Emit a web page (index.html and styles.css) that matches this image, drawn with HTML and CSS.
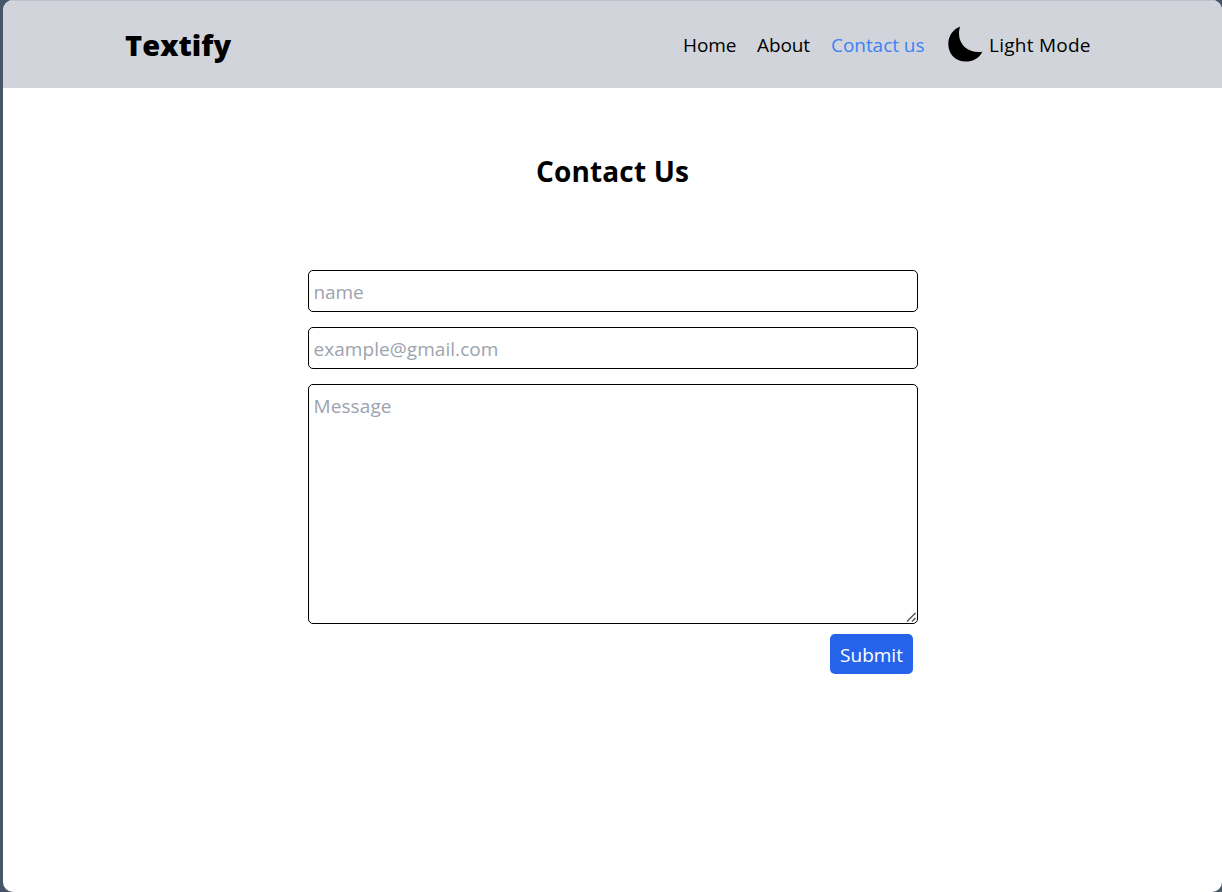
FILE: index.html
```html
<!DOCTYPE html>
<html lang="en">
<head>
<meta charset="utf-8">
<title>Textify</title>
<link rel="stylesheet" href="styles.css">
</head>
<body>
<div class="window">
  <header class="navbar">
    <span class="brand">Textify</span>
    <nav class="links">
      <a class="home">Home</a>
      <a class="about">About</a>
      <a class="contact">Contact us</a>
    </nav>
    <div class="mode">
      <svg class="moon" viewBox="0 0 36 37" width="36" height="37"><path d="M13.3 .6C5.8 3.5 1.3 10 1.3 18C1.3 28.4 9 35.6 18.5 35.6C26.2 35.6 32.2 32 35.4 25.7C23.5 27.6 12 20.6 12 7.5C12 5 12.4 2.7 13.3 .6Z"/></svg>
      <span class="mode-label">Light Mode</span>
    </div>
  </header>
  <main class="content">
    <h1 class="title">Contact Us</h1>
    <form class="form">
      <input class="field name" type="text" placeholder="name">
      <input class="field email" type="email" placeholder="example@gmail.com">
      <div class="message-box">
        <textarea class="field message" placeholder="Message"></textarea>
        <svg class="grip" viewBox="0 0 12 12" width="12" height="12"><path d="M2 10.5L10.5 2M7 10.5L10.5 7"/></svg>
      </div>
      <button class="submit" type="button"><span>Submit</span></button>
    </form>
  </main>
</div>
</body>
</html>
```
FILE: styles.css
```css
* { box-sizing: border-box; }
body {
  margin: 0;
  height: 892px;
  padding-left: 3px;
  overflow: hidden;
  background: #475569;
  color: #000;
  font-family: "Open Sans", "Noto Sans", sans-serif;
  font-size: 19px;
}
.window {
  height: 892px;
  background: #fff;
  border-radius: 10px;
  overflow: hidden;
}
.navbar {
  display: flex;
  align-items: center;
  height: 88px;
  padding: 0 131px 1px 122px;
  background: #d1d5db;
  border-top: 1px solid #bcc1ca;
  white-space: nowrap;
}
.brand {
  width: 107px;
  font-size: 29px;
  font-weight: 800;
  letter-spacing: 0.05px;
}
.links {
  display: flex;
  gap: 20px;
  margin-left: auto;
  padding-top: 2px;
}
.home { width: 54px; }
.about { width: 54px; }
.contact { width: 94px; color: #3b82f6; letter-spacing: -0.05px; }
.home, .about { letter-spacing: -0.1px; }
.mode {
  display: flex;
  align-items: center;
  margin-left: 22px;
}
.moon { display: block; }
.mode-label {
  width: 102px;
  margin-left: 6px;
  padding-top: 2px;
  letter-spacing: 0.25px;
}
.content { padding-top: 63px; }
.title {
  margin: 0;
  text-align: center;
  font-size: 28px;
  line-height: 40px;
  font-weight: 700;
  letter-spacing: 0.15px;
}
.form {
  display: flex;
  flex-direction: column;
  width: 610px;
  margin: 79px auto 0;
}
.field {
  display: block;
  width: 610px;
  height: 42px;
  margin: 0 0 15px;
  padding: 1px 5px 0;
  border: 1px solid #000;
  border-radius: 5px;
  background: #fff;
  font: inherit;
  outline: none;
}
.email { letter-spacing: 0.05px; }
.name { letter-spacing: -0.1px; }
.field::placeholder { color: #9ca3af; opacity: 1; }
.message-box {
  position: relative;
  margin-bottom: 10px;
}
.message {
  height: 240px;
  margin: 0;
  padding-top: 6px;
  line-height: 30px;
  letter-spacing: 0.1px;
  resize: none;
}
.grip {
  position: absolute;
  right: 1px;
  bottom: 1px;
  fill: none;
  stroke: #555;
  stroke-width: 1.5;
}
.submit {
  align-self: flex-end;
  width: 83px;
  height: 40px;
  margin-right: 5px;
  padding: 2px 0 0 1px;
  border: 0;
  border-radius: 5px;
  background: #2563eb;
  color: #fff;
  font: inherit;
}
```
